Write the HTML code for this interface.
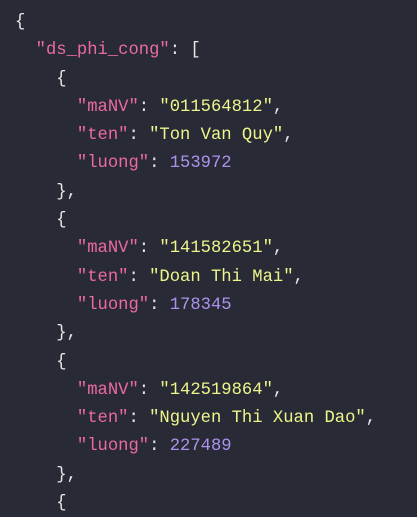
<!DOCTYPE html>
<html><head><meta charset="utf-8"><style>
html,body{margin:0;padding:0;background:#282a36;width:417px;height:517px;overflow:hidden}
pre{margin:0;padding:9px 0 0 15px;font-family:"Liberation Mono",monospace;font-size:17.2px;line-height:28.3px;color:#e6e6e6}
.k{color:#ec6aa0}.s{color:#eef58a}.n{color:#ad92ec}
</style></head><body><pre>{
  <span class="k">"ds_phi_cong"</span>: [
    {
      <span class="k">"maNV"</span>: <span class="s">"011564812"</span>,
      <span class="k">"ten"</span>: <span class="s">"Ton Van Quy"</span>,
      <span class="k">"luong"</span>: <span class="n">153972</span>
    },
    {
      <span class="k">"maNV"</span>: <span class="s">"141582651"</span>,
      <span class="k">"ten"</span>: <span class="s">"Doan Thi Mai"</span>,
      <span class="k">"luong"</span>: <span class="n">178345</span>
    },
    {
      <span class="k">"maNV"</span>: <span class="s">"142519864"</span>,
      <span class="k">"ten"</span>: <span class="s">"Nguyen Thi Xuan Dao"</span>,
      <span class="k">"luong"</span>: <span class="n">227489</span>
    },
    {
</pre></body></html>
